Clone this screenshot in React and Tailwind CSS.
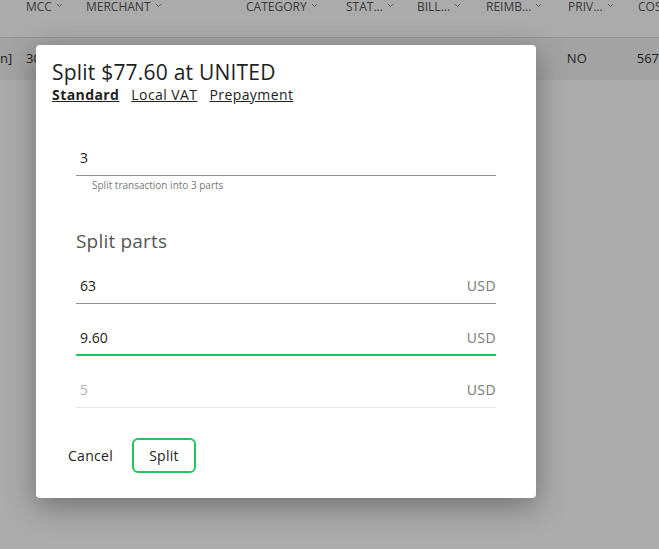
const cols = [
  { label: 'MCC', x: 'w-[60px]' },
  { label: 'MERCHANT', x: 'w-[160px]' },
  { label: 'CATEGORY', x: 'w-[100px]' },
  { label: 'STAT...', x: 'w-[71px]' },
  { label: 'BILL...', x: 'w-[69px]' },
  { label: 'REIMB...', x: 'w-[82px]' },
  { label: 'PRIV...', x: 'w-[70px]' },
  { label: 'COST', x: 'w-[60px]' },
];

function Chevron() {
  return (
    <svg width="7" height="5" viewBox="0 0 7 5" className="ml-1 mt-[-4px]">
      <path d="M1 1l2.5 2.5L6 1" stroke="#8a8a8a" strokeWidth="1" fill="none" />
    </svg>
  );
}

function AmountRow({ value, active, placeholder }) {
  return (
    <div
      className={`flex items-end justify-between pl-1 h-[52px] ${
        active
          ? 'border-b-2 border-[#22c55e] pb-[6px]'
          : placeholder
          ? 'border-b border-[#e6e6e6] pb-[7px]'
          : 'border-b border-[#8c8c8c] pb-[7px]'
      }`}
    >
      <span className={`text-[14px] leading-[20px] ${placeholder ? 'text-[#b0b0b0]' : 'text-[#222]'}`}>{value}</span>
      <span className="text-[14px] leading-[20px] tracking-[0.03em] text-[#777]">USD</span>
    </div>
  );
}

export default function App() {
  return (
    <div className="relative w-[659px] h-[549px] overflow-hidden bg-white font-['Open_Sans',sans-serif]">
      {/* table behind */}
      <div className="flex h-[38px] items-start pl-[26px] border-b border-[#ddd] text-[12px] text-[#555]">
        {cols.map((c) => (
          <div key={c.label} className={`flex items-center shrink-0 ${c.x} leading-[14px]`}>
            {c.label}
            {c.label !== 'COST' && <Chevron />}
          </div>
        ))}
      </div>
      <div className="flex h-[42px] items-center bg-[#f4f4f4] text-[13px] text-[#333]">
        <span className="w-[26px]">n]</span>
        <span className="w-[542px]">30</span>
        <span className="w-[70px]">NO</span>
        <span>567</span>
      </div>

      {/* overlay */}
      <div className="absolute inset-0 bg-black/[0.33]" />

      {/* modal */}
      <div className="absolute left-[36px] top-[45px] w-[500px] h-[453px] bg-white rounded-[4px] shadow-[0_8px_30px_rgba(0,0,0,0.35)] px-4 pt-[15px]">
        <h2 className="text-[21px] leading-[24px] tracking-[0.01em] text-[#222]">Split $77.60 at UNITED</h2>
        <div className="flex gap-[12px] mt-[2px] text-[14px] leading-[18px] tracking-[0.03em] text-[#222]">
          <span className="underline font-bold">Standard</span>
          <span className="underline">Local VAT</span>
          <span className="underline">Prepayment</span>
        </div>

        <div className="px-6 mt-[44px]">
          <div className="border-b border-[#8c8c8c] pb-[7px] pl-1 text-[14px] leading-[20px] text-[#222]">3</div>
          <div className="pl-4 mt-[3px] text-[10px] leading-[12px] text-[#777]">Split transaction into 3 parts</div>

          <div className="mt-[38px] text-[19px] text-[#555] leading-[24px] tracking-[0.01em]">Split parts</div>
          <div className="-mt-px">
            <AmountRow value="63" />
            <AmountRow value="9.60" active />
            <AmountRow value="5" placeholder />
          </div>
        </div>

        <div className="flex items-center gap-4 mt-[30px] pl-4">
          <span className="w-[48px] text-[14px] tracking-[0.02em] text-[#222]">Cancel</span>
          <button className="h-[35px] w-[64px] rounded-[6px] border-2 border-[#22c55e] text-[14px] tracking-[0.02em] text-[#222]">
            Split
          </button>
        </div>
      </div>
    </div>
  );
}
